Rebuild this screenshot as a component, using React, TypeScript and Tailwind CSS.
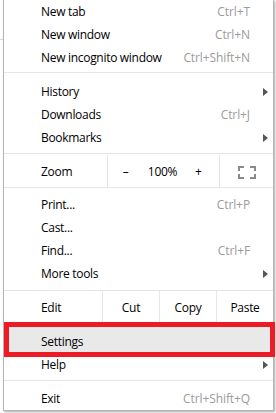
type MenuItemProps = {
  label: string;
  shortcut?: string;
  arrow?: boolean;
  className?: string;
};

const Arrow = () => (
  <svg width="5" height="8" viewBox="0 0 5 8">
    <path d="M0 0 L5 4 L0 8 Z" fill="#555555" />
  </svg>
);

const FullscreenIcon = () => (
  <svg width="18" height="13" viewBox="0 0 18 13" fill="none" stroke="#8a8a8a" strokeWidth="2">
    <path d="M1 5 V1 H6" />
    <path d="M12 1 H17 V5" />
    <path d="M17 8 V12 H12" />
    <path d="M6 12 H1 V8" />
  </svg>
);

const MenuItem = ({ label, shortcut, arrow, className = 'h-[23px]' }: MenuItemProps) => (
  <div className={`flex items-center ${className}`}>
    <span className="flex-1 pl-[37px] text-black tracking-[-0.3px]">{label}</span>
    {shortcut && <span className="text-[#9b9b9b] tracking-[-0.1px]">{shortcut}</span>}
    <div className="w-[23px] flex items-center pl-[13px]">{arrow && <Arrow />}</div>
  </div>
);

const Separator = ({ className = '' }: { className?: string }) => (
  <div className={`h-px bg-[#e6e6e6] ${className}`} />
);

const App = () => {
  return (
    <div
      className="relative flex w-[276px] h-[413px] bg-white overflow-hidden text-[12px] leading-none"
      style={{ fontFamily: '"Open Sans", "Noto Sans", sans-serif' }}
    >
      <div className="w-[3px]">
        <div className="mt-[39px] h-px bg-[#d6d6d6]" />
      </div>

      <div className="w-[271px] h-[411px] flex flex-col border-l border-r border-b border-[#b5b5b5] shadow-[1px_1px_2px_rgba(0,0,0,0.35)]">
        <MenuItem label="New tab" shortcut="Ctrl+T" />
        <MenuItem label="New window" shortcut="Ctrl+N" />
        <MenuItem label="New incognito window" shortcut="Ctrl+Shift+N" />
        <Separator className="mt-[3px] mb-[7px]" />

        <MenuItem label="History" arrow />
        <MenuItem label="Downloads" shortcut="Ctrl+J" />
        <MenuItem label="Bookmarks" arrow />
        <Separator className="mt-[4px]" />

        <div className="flex h-[33px] items-stretch tracking-[-0.3px]">
          <div className="w-[103px] flex items-center pl-[37px] pt-[3px] text-black">Zoom</div>
          <div className="w-px bg-[#e6e6e6]" />
          <div className="w-[35px] flex items-center justify-center pt-[3px] text-black">–</div>
          <div className="w-[39px] flex items-center justify-center pt-[3px] text-black">100%</div>
          <div className="w-[37px] flex items-center pl-[13px] pt-[3px] text-black">+</div>
          <div className="w-px bg-[#e6e6e6]" />
          <div className="flex-1 flex items-center justify-center pt-[3px]">
            <FullscreenIcon />
          </div>
        </div>
        <Separator className="mb-[5px]" />

        <MenuItem label="Print..." shortcut="Ctrl+P" />
        <MenuItem label="Cast..." />
        <MenuItem label="Find..." shortcut="Ctrl+F" />
        <MenuItem label="More tools" arrow />
        <Separator className="mt-[5px]" />

        <div className="flex h-[31px] items-stretch tracking-[-0.3px]">
          <div className="w-[98px] flex items-center pl-[37px] pt-[3px] text-black">Edit</div>
          {['Cut', 'Copy', 'Paste'].map((action) => (
            <div
              key={action}
              className="w-[57px] flex items-center justify-center pt-[3px] border-l border-[#e6e6e6] text-black"
            >
              {action}
            </div>
          ))}
        </div>

        <MenuItem label="Settings" className="h-[32px] pt-[7px] bg-[#e9e9e9]" />
        <MenuItem label="Help" arrow className="h-[22px]" />
        <Separator className="mt-[4px]" />
        <MenuItem label="Exit" shortcut="Ctrl+Shift+Q" className="h-[29px] pt-[6px]" />
      </div>

      <div className="absolute left-[4px] top-[322px] w-[271px] h-[35px] border-[5px] border-[#ed1c24]" />
    </div>
  );
};

export default App;
